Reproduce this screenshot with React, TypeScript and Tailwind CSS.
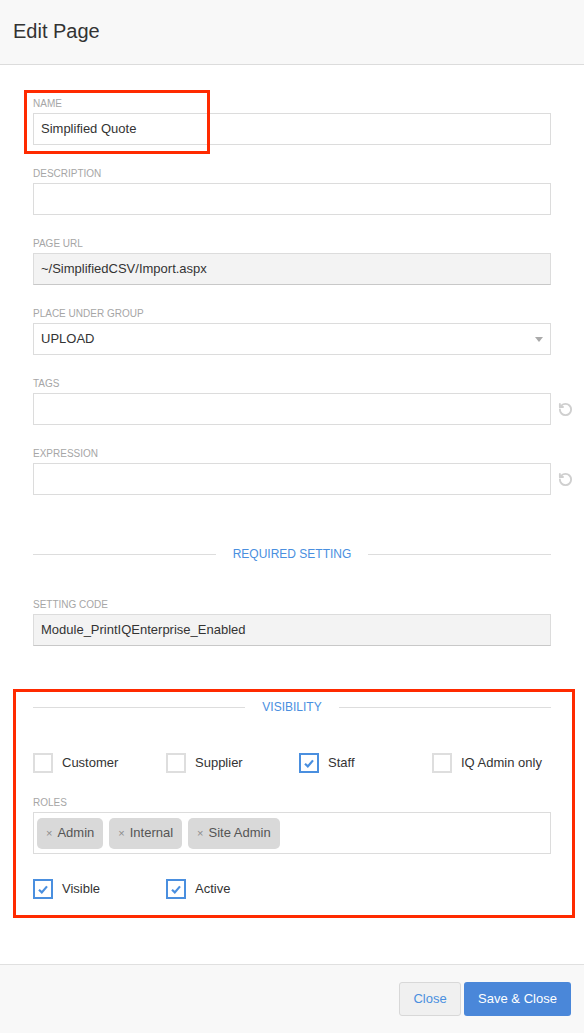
import { RotateCcw } from "lucide-react";

const font = { fontFamily: '"Liberation Sans", Arial, sans-serif' };

function Label({ children }: { children: React.ReactNode }) {
  return (
    <div className="text-[10px] leading-[10px] uppercase text-[#a6a6a6] mb-[4px]">
      {children}
    </div>
  );
}

function Field({
  label,
  value,
  readOnly,
  reset,
  select,
}: {
  label: string;
  value?: string;
  readOnly?: boolean;
  reset?: boolean;
  select?: boolean;
}) {
  return (
    <div className="mb-[24px]">
      <Label>{label}</Label>
      <div className="flex items-center">
        <div
          className={`relative flex-1 h-[32px] border border-[#dcdcdc] flex items-center px-[7px] text-[13px] text-[#333] ${
            readOnly ? "bg-[#f3f3f3] border-b-[#c8c8c8]" : "bg-white"
          }`}
        >
          {value}
          {select && (
            <span className="absolute right-[7px] top-[13px] w-0 h-0 border-l-[4px] border-r-[4px] border-t-[5px] border-l-transparent border-r-transparent border-t-[#aaa]" />
          )}
        </div>
      </div>
      {reset && (
        <div className="relative">
          <RotateCcw
            className="absolute right-[-22px] top-[-23px] text-[#cfcfcf]"
            size={15}
            strokeWidth={3}
          />
        </div>
      )}
    </div>
  );
}

function Divider({ title }: { title: string }) {
  return (
    <div className="flex items-center">
      <div className="flex-1 h-px bg-[#dddddd]" />
      <div className="px-[17px] text-[12px] text-[#4a8fdf] leading-none">{title}</div>
      <div className="flex-1 h-px bg-[#dddddd]" />
    </div>
  );
}

function Check({ label, checked }: { label: string; checked?: boolean }) {
  return (
    <div className="flex items-center w-[133px] shrink-0">
      <div
        className={`w-[20px] h-[20px] border-2 flex items-center justify-center ${
          checked ? "border-[#4a8fdf]" : "border-[#dedede]"
        }`}
      >
        {checked && (
          <svg width="10" height="9" viewBox="0 0 10 9">
            <path d="M1 4.8 L3.8 7.4 L9 1.4" fill="none" stroke="#4a8fdf" strokeWidth="2.2" />
          </svg>
        )}
      </div>
      <span className="ml-[9px] text-[13px] text-[#333]">{label}</span>
    </div>
  );
}

function Tag({ label }: { label: string }) {
  return (
    <div className="h-[31px] bg-[#d9d9d9] rounded-[5px] flex items-center px-[9px] text-[13px] text-[#555]">
      <span className="text-[#8d8d8d] text-[11px] mr-[5px]">×</span>
      {label}
    </div>
  );
}

export default function App() {
  return (
    <div className="relative w-[584px] h-[1033px] flex flex-col bg-white" style={font}>
      {/* Header */}
      <div className="h-[65px] shrink-0 bg-[#f8f8f8] border-b border-[#dcdcdc] flex items-center px-[13px]">
        <h1 className="text-[20px] text-[#333] pb-[3px]">Edit Page</h1>
      </div>

      {/* Body */}
      <div className="flex-1 px-[33px] pt-[34px]">
        <Field label="Name" value="Simplified Quote" />
        <Field label="Description" />
        <Field label="Page URL" value="~/SimplifiedCSV/Import.aspx" readOnly />
        <Field label="Place under group" value="UPLOAD" select />
        <Field label="Tags" reset />
        <Field label="Expression" reset />

        <div className="mt-[53px] mb-[40px]">
          <Divider title="REQUIRED SETTING" />
        </div>

        <Field label="Setting Code" value="Module_PrintIQEnterprise_Enabled" readOnly />

        <div className="mt-[55px]">
          <Divider title="VISIBILITY" />
        </div>

        <div className="flex mt-[40px]">
          <Check label="Customer" />
          <Check label="Supplier" />
          <Check label="Staff" checked />
          <Check label="IQ Admin only" />
        </div>

        <div className="mt-[25px]">
          <Label>Roles</Label>
          <div className="h-[42px] border border-[#dcdcdc] flex items-center gap-[6px] px-[3px]">
            <Tag label="Admin" />
            <Tag label="Internal" />
            <Tag label="Site Admin" />
          </div>
        </div>

        <div className="flex mt-[25px]">
          <Check label="Visible" checked />
          <Check label="Active" checked />
        </div>
      </div>

      {/* Footer */}
      <div className="h-[69px] shrink-0 bg-[#f8f8f8] border-t border-[#e0e0e0] flex items-center justify-end gap-[3px] px-[13px]">
        <button className="h-[34px] w-[62px] bg-[#f0f0f0] border border-[#d8d8d8] rounded-[3px] text-[13px] text-[#4a8fdf]">
          Close
        </button>
        <button className="h-[34px] w-[107px] bg-[#4a87d9] rounded-[3px] text-[13px] text-white">
          Save &amp; Close
        </button>
      </div>

      {/* Annotation boxes */}
      <div className="absolute left-[24px] top-[90px] w-[186px] h-[64px] border-[3px] border-[#ff2a00] pointer-events-none" />
      <div className="absolute left-[13px] top-[689px] w-[562px] h-[229px] border-[3px] border-[#ff2a00] pointer-events-none" />
    </div>
  );
}
